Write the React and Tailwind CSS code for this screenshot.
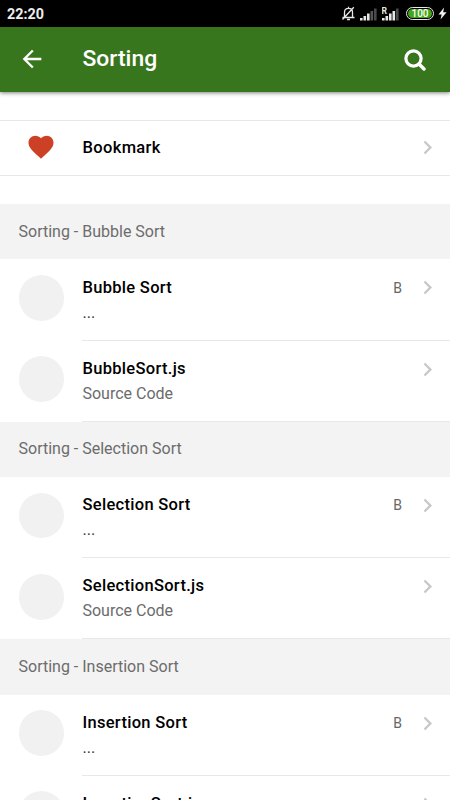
import React from 'react';

const sections = [
  {
    title: 'Sorting - Bubble Sort',
    items: [
      { title: 'Bubble Sort', subtitle: '...', badge: 'B' },
      { title: 'BubbleSort.js', subtitle: 'Source Code' },
    ],
  },
  {
    title: 'Sorting - Selection Sort',
    items: [
      { title: 'Selection Sort', subtitle: '...', badge: 'B' },
      { title: 'SelectionSort.js', subtitle: 'Source Code' },
    ],
  },
  {
    title: 'Sorting - Insertion Sort',
    items: [
      { title: 'Insertion Sort', subtitle: '...', badge: 'B' },
      { title: 'InsertionSort.js', subtitle: 'Source Code' },
    ],
  },
];

const Chevron = () => (
  <svg className="w-[27px] h-[27px] shrink-0 text-[#c7c7c7]" viewBox="0 0 24 24" fill="currentColor">
    <path d="M10 6L8.59 7.41 13.17 12l-4.58 4.59L10 18l6-6z" />
  </svg>
);

const SignalBars = ({ roaming }) => (
  <svg className="w-[18px] h-[14px]" viewBox="0 0 18 14" fill="#e8e8e8">
    <rect x="0" y="11" width="2.6" height="2.5" />
    <rect x="3.5" y="9" width="2.6" height="4.5" />
    <rect x="7" y="6.5" width="2.6" height="7" />
    <rect x="10.5" y="4" width="2.6" height="9.5" fill={roaming ? '#e8e8e8' : '#555'} />
    <rect x="14" y="1.5" width="2.6" height="12" fill="#4a4a4a" />
    {roaming && (
      <text x="-0.5" y="7" fontSize="8.5" fontWeight="700" fontFamily="Roboto, sans-serif">R</text>
    )}
  </svg>
);

const StatusBar = () => (
  <div className="h-[27px] bg-black flex items-center pl-[7px] pr-[3px] text-[#ededed]">
    <span className="text-[14.3px] leading-none font-bold pt-px">22:20</span>
    <div className="ml-auto flex items-center">
      {/* Muted bell */}
      <svg className="w-[15px] h-[15px] mr-[4px]" viewBox="0 0 15 15" fill="none" stroke="#e8e8e8" strokeWidth="1.3">
        <path d="M1.5 11.5h12M3.5 11.5V6.2c0-2.3 1.7-3.9 4-3.9s4 1.6 4 3.9v5.3M6 13.5h3M7.5 2.3V.8M1.5 13.5L12.8 1.2" />
      </svg>
      <SignalBars />
      <span className="w-1" />
      <SignalBars roaming />
      {/* Battery */}
      <div className="ml-[6px] h-[13px] w-[28px] rounded-full border-[1.5px] border-[#e8e8e8] p-px">
        <div className="h-full rounded-full bg-[#43a51b] flex items-center justify-center text-[10px] leading-none font-medium text-white">
          100
        </div>
      </div>
      <svg className="ml-[4px] w-[9px] h-[13px]" viewBox="0 0 9 13" fill="#f2f2f2">
        <path d="M6 .5L.5 7.5h3.2L2.5 12.5 8.6 5.3H5.2z" />
      </svg>
    </div>
  </div>
);

const Header = () => (
  <header className="relative h-[64.5px] bg-[#38761d] text-white flex items-center shadow-[0_1px_4px_rgba(0,0,0,0.5)]">
    <svg className="ml-[18px] w-[28px] h-[28px]" viewBox="0 0 24 24" fill="currentColor">
      <path d="M20 11H7.83l5.59-5.59L12 4l-8 8 8 8 1.41-1.41L7.83 13H20v-2z" />
    </svg>
    <h1 className="ml-[36.5px] pt-px text-[22.9px] leading-none font-medium">Sorting</h1>
    <svg className="ml-auto mr-[24px] mt-[2px] w-[22px] h-[22px]" viewBox="0 0 22 22" fill="none" stroke="currentColor">
      <circle cx="9.5" cy="9.5" r="7.6" strokeWidth="3.2" />
      <path d="M15 15l5 5" strokeWidth="3.4" strokeLinecap="round" />
    </svg>
  </header>
);

const ListItem = ({ item }) => (
  <li className="h-[81.1px] flex pl-[18.5px]">
    <div className="mt-[15.7px] w-[45.7px] h-[45.7px] rounded-full bg-[#f1f1f1] shrink-0" />
    <div className="ml-[18.3px] flex-1 flex border-b border-[#e8e8e8] pr-[9.5px]">
      <div className="flex-1 pt-[15.3px]">
        <div className="text-[16.5px] leading-[25px] font-medium tracking-[0.3px] text-black">{item.title}</div>
        <div className={`text-[16px] leading-[25px] ${item.badge ? 'text-[#333]' : 'text-[#6c6c6c]'}`}>
          {item.subtitle}
        </div>
      </div>
      {item.badge && <span className="pt-[15.3px] mr-[11.5px] text-[14px] leading-[26px] text-[#666]">{item.badge}</span>}
      <div className="pt-[15px]">
        <Chevron />
      </div>
    </div>
  </li>
);

const App = () => {
  return (
    <div className="w-[450px] h-[800px] overflow-hidden bg-white font-[Roboto,sans-serif]">
      <StatusBar />
      <Header />

      {/* Bookmark */}
      <div className="mt-[28.5px] mb-[28.5px] h-[55.5px] border-y border-[#e8e8e8] flex items-center pl-[26.3px] pr-[9.5px]">
        <svg className="w-[30px] h-[30px] mb-[2px] text-[#cc4125]" viewBox="0 0 24 24" fill="currentColor">
          <path d="M12 21.35l-1.45-1.32C5.4 15.36 2 12.28 2 8.5 2 5.42 4.42 3 7.5 3c1.74 0 3.41.81 4.5 2.09C13.09 3.81 14.76 3 16.5 3 19.58 3 22 5.42 22 8.5c0 3.78-3.4 6.86-8.55 11.54L12 21.35z" />
        </svg>
        <span className="ml-[26.2px] flex-1 text-[16.5px] leading-[25px] font-medium tracking-[0.35px] text-black">Bookmark</span>
        <Chevron />
      </div>

      {sections.map((section) => (
        <section key={section.title}>
          <h2 className="h-[55.45px] bg-[#f3f3f3] flex items-center pl-[18.5px] text-[16px] text-[#6c6c6c]">
            {section.title}
          </h2>
          <ul>
            {section.items.map((item) => (
              <ListItem key={item.title} item={item} />
            ))}
          </ul>
        </section>
      ))}
    </div>
  );
};

export default App;
